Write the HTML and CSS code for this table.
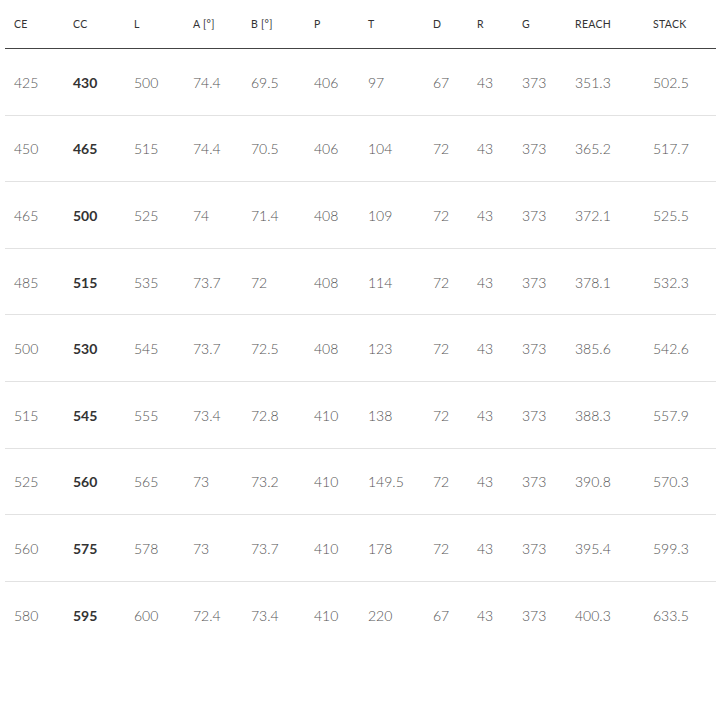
FILE: index.html
```html
<!DOCTYPE html>
<html>
<head>
<meta charset="utf-8">
<link rel="stylesheet" href="styles.css">
</head>
<body>
<table class="geo">
  <colgroup>
    <col style="width:59px"><col style="width:61px"><col style="width:59px"><col style="width:58px">
    <col style="width:63px"><col style="width:54px"><col style="width:65px"><col style="width:44px">
    <col style="width:45px"><col style="width:53px"><col style="width:78px"><col style="width:72px">
  </colgroup>
  <thead>
    <tr><th>CE</th><th>CC</th><th>L</th><th>A [°]</th><th>B [°]</th><th>P</th><th>T</th><th>D</th><th>R</th><th>G</th><th>REACH</th><th>STACK</th></tr>
  </thead>
  <tbody>
    <tr><td>425</td><td class="b">430</td><td>500</td><td>74.4</td><td>69.5</td><td>406</td><td>97</td><td>67</td><td>43</td><td>373</td><td>351.3</td><td>502.5</td></tr>
    <tr><td>450</td><td class="b">465</td><td>515</td><td>74.4</td><td>70.5</td><td>406</td><td>104</td><td>72</td><td>43</td><td>373</td><td>365.2</td><td>517.7</td></tr>
    <tr><td>465</td><td class="b">500</td><td>525</td><td>74</td><td>71.4</td><td>408</td><td>109</td><td>72</td><td>43</td><td>373</td><td>372.1</td><td>525.5</td></tr>
    <tr><td>485</td><td class="b">515</td><td>535</td><td>73.7</td><td>72</td><td>408</td><td>114</td><td>72</td><td>43</td><td>373</td><td>378.1</td><td>532.3</td></tr>
    <tr><td>500</td><td class="b">530</td><td>545</td><td>73.7</td><td>72.5</td><td>408</td><td>123</td><td>72</td><td>43</td><td>373</td><td>385.6</td><td>542.6</td></tr>
    <tr><td>515</td><td class="b">545</td><td>555</td><td>73.4</td><td>72.8</td><td>410</td><td>138</td><td>72</td><td>43</td><td>373</td><td>388.3</td><td>557.9</td></tr>
    <tr><td>525</td><td class="b">560</td><td>565</td><td>73</td><td>73.2</td><td>410</td><td>149.5</td><td>72</td><td>43</td><td>373</td><td>390.8</td><td>570.3</td></tr>
    <tr><td>560</td><td class="b">575</td><td>578</td><td>73</td><td>73.7</td><td>410</td><td>178</td><td>72</td><td>43</td><td>373</td><td>395.4</td><td>599.3</td></tr>
    <tr><td>580</td><td class="b">595</td><td>600</td><td>72.4</td><td>73.4</td><td>410</td><td>220</td><td>67</td><td>43</td><td>373</td><td>400.3</td><td>633.5</td></tr>
  </tbody>
</table>
</body>
</html>
```

FILE: styles.css
```css
html, body {
  margin: 0;
  padding: 0;
  background: #fff;
}
body {
  padding: 0 4px 0 5px;
  font-family: "Lato", "Liberation Sans", sans-serif;
}
.geo {
  width: 711px;
  table-layout: fixed;
  border-collapse: collapse;
}
.geo th {
  height: 48px;
  padding: 0 0 0 9px;
  text-align: left;
  vertical-align: middle;
  font-size: 10.5px;
  font-weight: 400;
  letter-spacing: 0.3px;
  color: #333;
  border-bottom: 1.5px solid #444;
}
.geo td {
  height: 64.6px;
  padding: 1px 0 0 9px;
  text-align: left;
  vertical-align: middle;
  font-size: 14px;
  font-weight: 300;
  color: #555;
  border-bottom: 1px solid #e2e2e2;
}
.geo tbody tr:last-child td {
  border-bottom: none;
}
.geo td.b {
  font-weight: 700;
  color: #333;
}
```
